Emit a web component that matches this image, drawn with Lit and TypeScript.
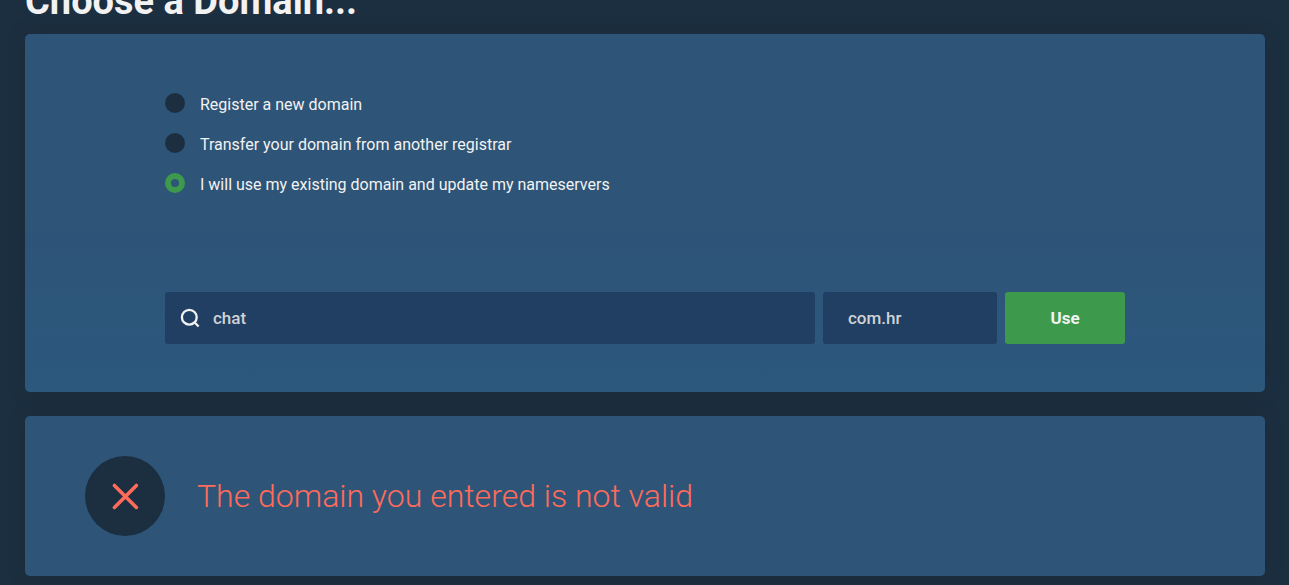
import { LitElement, html, css } from "lit";
import { customElement, state } from "lit/decorators.js";

const OPTIONS = [
  { id: "register", label: "Register a new domain" },
  { id: "transfer", label: "Transfer your domain from another registrar" },
  { id: "existing", label: "I will use my existing domain and update my nameservers" },
];

@customElement("app-root")
export class AppRoot extends LitElement {
  static styles = css`
    :host {
      display: flow-root;
      box-sizing: border-box;
      min-height: 100vh;
      overflow: hidden;
      padding: 0 24px 9px 25px;
      background: #1c2f40;
      color: #f2f2f2;
      font-family: Roboto, "Liberation Sans", sans-serif;
      font-size: 16px;
    }
    .title {
      margin: -23px 0 9px;
      font-size: 38px;
      line-height: 48px;
      font-weight: 700;
    }
    .card {
      border-radius: 5px;
      background: #2e5578;
      box-shadow: 0 0 16px rgba(28, 40, 52, 0.4);
    }
    .chooser {
      padding: 50px 24px 48px;
      background: linear-gradient(#2e5477 50%, #2c587e);
    }
    .form {
      max-width: 960px;
      margin: 0 auto;
    }
    .options {
      margin: 0 0 88px;
      padding: 0;
      border: 0;
    }
    .option {
      display: flex;
      align-items: center;
      gap: 15px;
      height: 40px;
      cursor: pointer;
    }
    .radio {
      appearance: none;
      flex: none;
      width: 20px;
      height: 20px;
      margin: 0 0 2px;
      border-radius: 50%;
      background: #1c2f40;
    }
    .radio:checked {
      border: 6px solid #3d9a4c;
      background: transparent;
    }
    .search {
      display: flex;
      gap: 8px;
    }
    .field {
      display: flex;
      align-items: center;
      box-sizing: border-box;
      height: 52px;
      border-radius: 3px;
      background: #213f63;
    }
    .name {
      flex: 1;
      min-width: 0;
      gap: 13px;
      padding: 0 15px;
    }
    .tld {
      width: 174px;
      padding: 0 25px;
    }
    .icon {
      flex: none;
      width: 20px;
      height: 20px;
      fill: none;
      stroke: #f2f2f2;
      stroke-width: 2.3;
    }
    .input {
      flex: 1;
      min-width: 0;
      padding: 0;
      border: 0;
      outline: 0;
      background: transparent;
      color: #d0d2d5;
      font: 500 17px/24px Roboto, "Liberation Sans", sans-serif;
    }
    .use {
      width: 120px;
      height: 52px;
      padding: 0;
      border: 0;
      border-radius: 3px;
      background: #3d9a4c;
      color: #f2f2f2;
      font: 700 17px/24px Roboto, "Liberation Sans", sans-serif;
      cursor: pointer;
    }
    .result {
      display: flex;
      align-items: center;
      gap: 32px;
      margin-top: 24px;
      padding: 40px 60px;
    }
    .badge {
      display: grid;
      place-items: center;
      flex: none;
      width: 80px;
      height: 80px;
      border-radius: 50%;
      background: #1c2f40;
    }
    .cross {
      width: 28px;
      height: 28px;
      fill: none;
      stroke: #ff6b5b;
      stroke-width: 3.6;
      stroke-linecap: round;
    }
    .message {
      margin: 0;
      color: #ff6b5b;
      font-size: 32px;
      line-height: 40px;
      font-weight: 300;
    }
  `;

  @state() private selected = "existing";

  render() {
    return html`
      <h1 class="title">Choose a Domain...</h1>
      <section class="card chooser">
        <form class="form" @submit=${(e: Event) => e.preventDefault()}>
          <fieldset class="options" aria-label="Domain options">
            ${OPTIONS.map(
              (o) => html`
                <label class="option">
                  <input
                    class="radio"
                    type="radio"
                    name="option"
                    .checked=${this.selected === o.id}
                    @change=${() => (this.selected = o.id)}
                  />
                  <span>${o.label}</span>
                </label>
              `
            )}
          </fieldset>
          <div class="search">
            <label class="field name">
              <svg class="icon" viewBox="0 0 20 20" aria-hidden="true">
                <circle cx="9.3" cy="9.2" r="7.4" />
                <path d="M14.4 14.3l4.2 4.2" />
              </svg>
              <input class="input" type="text" aria-label="Domain name" value="chat" />
            </label>
            <label class="field tld">
              <input class="input" type="text" aria-label="Domain extension" value="com.hr" />
            </label>
            <button class="use" type="submit">Use</button>
          </div>
        </form>
      </section>
      <section class="card result" role="alert">
        <div class="badge">
          <svg class="cross" viewBox="0 0 28 28" aria-hidden="true">
            <path d="M3.4 3.4l22 22M25.4 3.4l-22 22" />
          </svg>
        </div>
        <p class="message">The domain you entered is not valid</p>
      </section>
    `;
  }
}
